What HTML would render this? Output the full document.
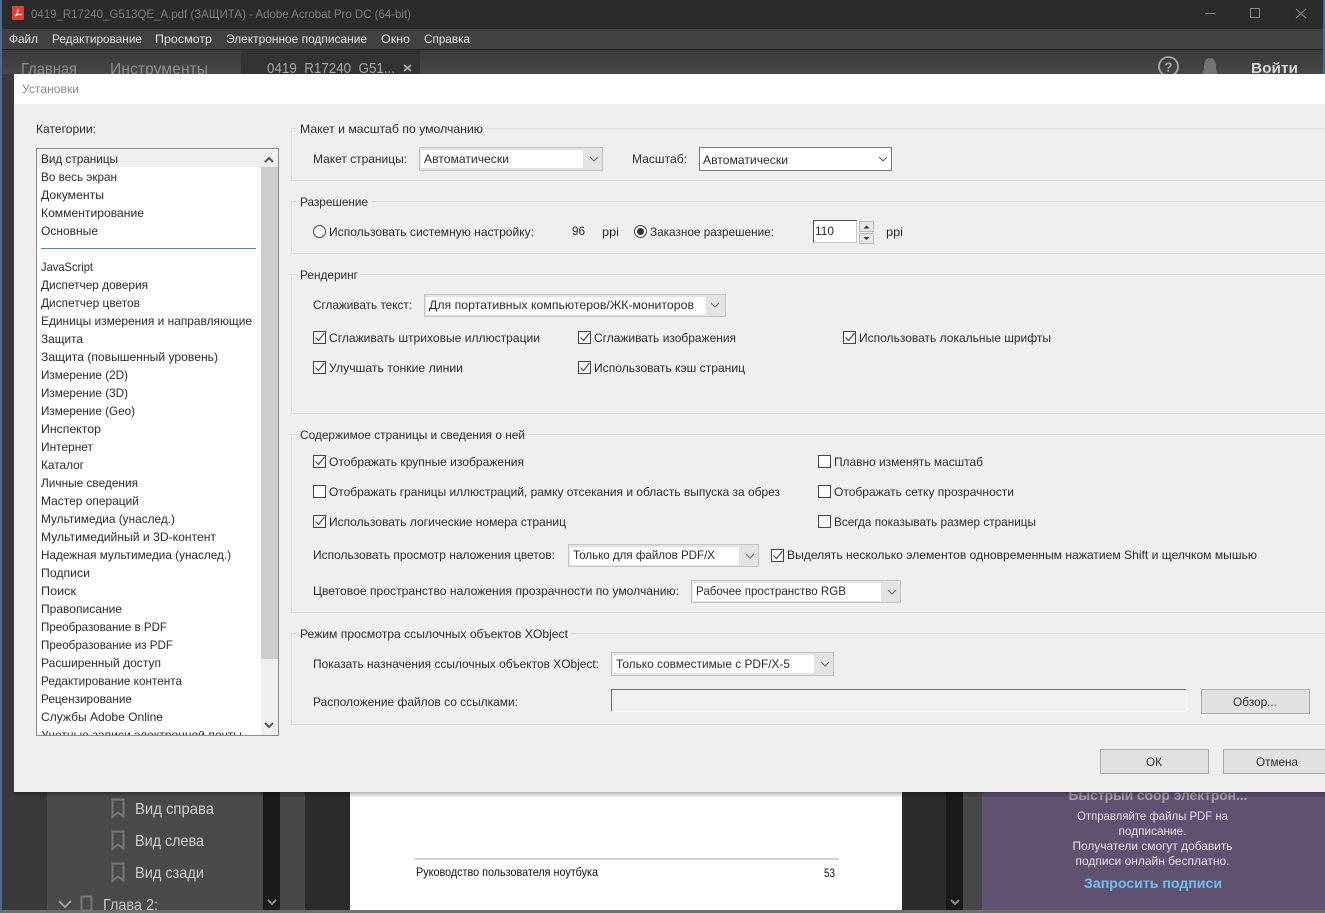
<!DOCTYPE html>
<html><head><meta charset="utf-8"><style>
html,body{margin:0;padding:0;background:#333;overflow:hidden;width:1325px;height:913px}
svg{display:block}
text{font-family:"Liberation Sans",sans-serif;font-size:12px;fill:#2b2b2b;white-space:pre}
.g{fill:none;stroke:#dcdcdc;stroke-width:1}
.btn{fill:#e1e1e1;stroke:#adadad}
.cb{fill:#fdfdfd;stroke:#444;stroke-width:1}
.ck{fill:none;stroke:#444;stroke-width:1.1}
.ch{fill:none;stroke:#666;stroke-width:1}
.sel{fill:#e3e3e3;stroke:#c4c4c4}
.w{fill:#fff}
</style></head><body>
<svg width="1325" height="913" viewBox="0 0 1325 913" xmlns="http://www.w3.org/2000/svg">
<defs>
<linearGradient id="tb" x1="0" y1="0" x2="0" y2="1"><stop offset="0" stop-color="#3a3a3a"/><stop offset="1" stop-color="#474747"/></linearGradient>
<linearGradient id="sh" x1="0" y1="0" x2="0" y2="1"><stop offset="0" stop-color="#000" stop-opacity=".28"/><stop offset="1" stop-color="#000" stop-opacity="0"/></linearGradient>
</defs>
<!-- app chrome -->
<rect width="1325" height="913" fill="#3a3a3a"/>
<rect x="0" y="0" width="2" height="913" fill="#3f6f9f"/>
<rect x="1323" y="0" width="2" height="74" fill="#3f6f9f"/>
<rect x="2" y="0" width="1321" height="29" fill="#2b2b2b"/>
<rect x="2" y="29" width="1321" height="20" fill="#414141"/>
<rect x="2" y="49" width="1321" height="1" fill="#222"/>
<rect x="2" y="50" width="1321" height="24" fill="url(#tb)"/>
<rect x="241" y="50" width="179" height="24" fill="#333"/>
<rect x="12" y="6" width="12" height="14" rx="1" fill="#e0403a"/>
<path d="M15 16c2-1 3-4 3-7M15 16c3-2 5-2 7-1" fill="none" stroke="#fff" stroke-width="1"/>
<text x="31" y="18" textLength="380" lengthAdjust="spacingAndGlyphs" style="fill:#7f7f7f">0419_R17240_G513QE_A.pdf (ЗАЩИТА) - Adobe Acrobat Pro DC (64-bit)</text>
<path d="M1205 13.500h10" stroke="#8a8a8a" fill="none"/>
<rect x="1250.500" y="8.500" width="9" height="9" fill="none" stroke="#8a8a8a"/>
<path d="M1296 9l10 9M1306 9l-10 9" stroke="#8a8a8a" fill="none"/>
<g style="fill:#e4e4e4">
<text x="9" y="43" textLength="29" lengthAdjust="spacingAndGlyphs" style="fill:#e4e4e4">Файл</text>
<text x="52" y="43" textLength="90" lengthAdjust="spacingAndGlyphs" style="fill:#e4e4e4">Редактирование</text>
<text x="155" y="43" textLength="57" lengthAdjust="spacingAndGlyphs" style="fill:#e4e4e4">Просмотр</text>
<text x="226" y="43" textLength="141" lengthAdjust="spacingAndGlyphs" style="fill:#e4e4e4">Электронное подписание</text>
<text x="381" y="43" textLength="29" lengthAdjust="spacingAndGlyphs" style="fill:#e4e4e4">Окно</text>
<text x="424" y="43" textLength="46" lengthAdjust="spacingAndGlyphs" style="fill:#e4e4e4">Справка</text>
</g>
<text x="21" y="74" textLength="56" lengthAdjust="spacingAndGlyphs" style="font-size:16px;fill:#8f8f8f">Главная</text>
<text x="110" y="74" textLength="98" lengthAdjust="spacingAndGlyphs" style="font-size:16px;fill:#8f8f8f">Инструменты</text>
<text x="267" y="73" textLength="128" lengthAdjust="spacingAndGlyphs" style="font-size:15px;fill:#a8a8a8">0419_R17240_G51...</text>
<path d="M404 65l7 6M411 65l-7 6" stroke="#b0b0b0" stroke-width="1.800" fill="none"/>
<circle cx="1168.500" cy="66.500" r="9.500" fill="none" stroke="#a8a8a8" stroke-width="1.800"/>
<text x="1168.500" y="71.500" text-anchor="middle" style="font-size:13px;font-weight:bold;fill:#a8a8a8">?</text>
<path d="M1202 74c1-2 2-3 2-8 0-4 2-8 6-8s6 4 6 8c0 5 1 6 2 8z" fill="#737373"/>
<text x="1251" y="73" textLength="47" lengthAdjust="spacingAndGlyphs" style="font-size:15px;font-weight:bold;fill:#d8d8d8">Войти</text>

<!-- background document, lower area -->
<rect x="2" y="792" width="45" height="118" fill="#3a3a3a"/>
<rect x="47" y="792" width="216" height="118" fill="#4a4a4a"/>
<rect x="263" y="792" width="17" height="118" fill="#1b1b1b"/>
<rect x="280" y="792" width="25" height="118" fill="#474747"/>
<rect x="305" y="792" width="45" height="118" fill="#2b2b2b"/>
<rect x="350" y="792" width="552" height="118" fill="#fff"/>
<rect x="902" y="792" width="44" height="118" fill="#2b2b2b"/>
<rect x="946" y="792" width="17" height="118" fill="#1a1a1a"/>
<rect x="963" y="792" width="19" height="118" fill="#474747"/>
<rect x="982" y="792" width="343" height="118" fill="#5f5270"/>
<rect x="0" y="910" width="1325" height="3" fill="#6e6e6e"/>
<path d="M112.500 799.500h11v17l-5.500-4-5.500 4z" fill="none" stroke="#777" stroke-width="2"/>
<path d="M112.500 831.500h11v17l-5.500-4-5.500 4z" fill="none" stroke="#777" stroke-width="2"/>
<path d="M112.500 863.500h11v17l-5.500-4-5.500 4z" fill="none" stroke="#777" stroke-width="2"/>
<text x="135" y="814" textLength="79" lengthAdjust="spacingAndGlyphs" style="font-size:16px;fill:#d0d0d0">Вид справа</text>
<text x="135" y="846" textLength="69" lengthAdjust="spacingAndGlyphs" style="font-size:16px;fill:#d0d0d0">Вид слева</text>
<text x="135" y="878" textLength="69" lengthAdjust="spacingAndGlyphs" style="font-size:16px;fill:#d0d0d0">Вид сзади</text>
<path d="M59 901l6 6 6-6" fill="none" stroke="#aaa" stroke-width="1.800"/>
<path d="M81.500 896.500h10v14h-10z" fill="none" stroke="#777" stroke-width="2"/>
<svg x="100" y="890" width="70" height="20" viewBox="100 890 70 20"><text x="103" y="910" textLength="55" lengthAdjust="spacingAndGlyphs" style="font-size:16px;fill:#c8c8c8">Глава 2:</text></svg>
<path d="M268 900l4 4 4-4M951 900l4 4 4-4" fill="none" stroke="#8a8a8a" stroke-width="2"/>
<rect x="415" y="858" width="424" height="2" fill="#d0d0d0"/>
<text x="416" y="876" textLength="182" lengthAdjust="spacingAndGlyphs" style="fill:#111">Руководство пользователя ноутбука</text>
<text x="824" y="877" textLength="11" lengthAdjust="spacingAndGlyphs" style="fill:#111">53</text>
<text x="1158" y="800" text-anchor="middle" textLength="179" lengthAdjust="spacingAndGlyphs" style="font-size:14px;font-weight:bold;fill:#a8a2ad">Быстрый сбор электрон...</text>
<g text-anchor="middle">
<text x="1152.500" y="820" textLength="151" lengthAdjust="spacingAndGlyphs" style="fill:#e6e4ea">Отправляйте файлы PDF на</text>
<text x="1152.500" y="835" textLength="68" lengthAdjust="spacingAndGlyphs" style="fill:#e6e4ea">подписание.</text>
<text x="1152.500" y="850" textLength="160" lengthAdjust="spacingAndGlyphs" style="fill:#e6e4ea">Получатели смогут добавить</text>
<text x="1152.500" y="865" textLength="154" lengthAdjust="spacingAndGlyphs" style="fill:#e6e4ea">подписи онлайн бесплатно.</text>
<text x="1153" y="888" textLength="138" lengthAdjust="spacingAndGlyphs" style="font-size:14px;font-weight:bold;fill:#6fc0ee">Запросить подписи</text>
</g>

<!-- dialog -->
<rect x="14" y="792" width="1311" height="6" fill="url(#sh)"/>
<rect x="14" y="74" width="1311" height="718" fill="#efefef"/>
<rect x="14" y="74" width="1311" height="30" fill="#fff"/>
<text x="22" y="93" textLength="57" lengthAdjust="spacingAndGlyphs" style="fill:#8a8a8a">Установки</text>
<text x="36" y="133" textLength="60" lengthAdjust="spacingAndGlyphs">Категории:</text>

<!-- list -->
<rect x="36.500" y="148.500" width="242" height="587" fill="#fff" stroke="#8a8a8a"/>
<rect x="37" y="149" width="224" height="18" fill="#efefef"/>
<rect x="261" y="149" width="17" height="586" fill="#efefef"/>
<rect x="261" y="167" width="17" height="492" fill="#cdcdcd"/>
<path d="M265 162l4-4 4 4M265 723l4 4 4-4" fill="none" stroke="#555" stroke-width="2"/>
<text x="41" y="163" textLength="77" lengthAdjust="spacingAndGlyphs">Вид страницы</text>
<text x="41" y="181" textLength="76" lengthAdjust="spacingAndGlyphs">Во весь экран</text>
<text x="41" y="199" textLength="63" lengthAdjust="spacingAndGlyphs">Документы</text>
<text x="41" y="217" textLength="103" lengthAdjust="spacingAndGlyphs">Комментирование</text>
<text x="41" y="235" textLength="57" lengthAdjust="spacingAndGlyphs">Основные</text>
<rect x="41" y="248" width="215" height="1" fill="#4f8f9f"/>
<text x="41" y="271" textLength="52" lengthAdjust="spacingAndGlyphs">JavaScript</text>
<text x="41" y="289" textLength="107" lengthAdjust="spacingAndGlyphs">Диспетчер доверия</text>
<text x="41" y="307" textLength="99" lengthAdjust="spacingAndGlyphs">Диспетчер цветов</text>
<text x="41" y="325" textLength="211" lengthAdjust="spacingAndGlyphs">Единицы измерения и направляющие</text>
<text x="41" y="343" textLength="42" lengthAdjust="spacingAndGlyphs">Защита</text>
<text x="41" y="361" textLength="177" lengthAdjust="spacingAndGlyphs">Защита (повышенный уровень)</text>
<text x="41" y="379" textLength="87" lengthAdjust="spacingAndGlyphs">Измерение (2D)</text>
<text x="41" y="397" textLength="87" lengthAdjust="spacingAndGlyphs">Измерение (3D)</text>
<text x="41" y="415" textLength="94" lengthAdjust="spacingAndGlyphs">Измерение (Geo)</text>
<text x="41" y="433" textLength="60" lengthAdjust="spacingAndGlyphs">Инспектор</text>
<text x="41" y="451" textLength="52" lengthAdjust="spacingAndGlyphs">Интернет</text>
<text x="41" y="469" textLength="43" lengthAdjust="spacingAndGlyphs">Каталог</text>
<text x="41" y="487" textLength="97" lengthAdjust="spacingAndGlyphs">Личные сведения</text>
<text x="41" y="505" textLength="98" lengthAdjust="spacingAndGlyphs">Мастер операций</text>
<text x="41" y="523" textLength="134" lengthAdjust="spacingAndGlyphs">Мультимедиа (унаслед.)</text>
<text x="41" y="541" textLength="175" lengthAdjust="spacingAndGlyphs">Мультимедийный и 3D-контент</text>
<text x="41" y="559" textLength="190" lengthAdjust="spacingAndGlyphs">Надежная мультимедиа (унаслед.)</text>
<text x="41" y="577" textLength="49" lengthAdjust="spacingAndGlyphs">Подписи</text>
<text x="41" y="595" textLength="35" lengthAdjust="spacingAndGlyphs">Поиск</text>
<text x="41" y="613" textLength="81" lengthAdjust="spacingAndGlyphs">Правописание</text>
<text x="41" y="631" textLength="126" lengthAdjust="spacingAndGlyphs">Преобразование в PDF</text>
<text x="41" y="649" textLength="132" lengthAdjust="spacingAndGlyphs">Преобразование из PDF</text>
<text x="41" y="667" textLength="120" lengthAdjust="spacingAndGlyphs">Расширенный доступ</text>
<text x="41" y="685" textLength="141" lengthAdjust="spacingAndGlyphs">Редактирование контента</text>
<text x="41" y="703" textLength="91" lengthAdjust="spacingAndGlyphs">Рецензирование</text>
<text x="41" y="721" textLength="122" lengthAdjust="spacingAndGlyphs">Службы Adobe Online</text>
<svg x="37" y="731" width="224" height="4" viewBox="37 731 224 4"><text x="41" y="739" textLength="201" lengthAdjust="spacingAndGlyphs">Учетные записи электронной почты</text></svg>

<!-- group boxes -->
<path class="g" d="M291.500 180.500V128.500h1034M291.500 180.500h1034"/>
<path class="g" d="M291.500 253.500V201.500h1034M291.500 253.500h1034"/>
<path class="g" d="M291.500 413.500V274.500h1034M291.500 413.500h1034"/>
<path class="g" d="M291.500 612.500V434.500h1034M291.500 612.500h1034"/>
<path class="g" d="M291.500 724.500V633.500h1034M291.500 724.500h1034"/>
<rect x="298" y="122" width="187" height="14" fill="#efefef"/>
<rect x="298" y="195" width="74" height="14" fill="#efefef"/>
<rect x="298" y="268" width="62" height="14" fill="#efefef"/>
<rect x="298" y="428" width="229" height="14" fill="#efefef"/>
<rect x="298" y="627" width="273" height="14" fill="#efefef"/>
<text x="300" y="133" textLength="183" lengthAdjust="spacingAndGlyphs">Макет и масштаб по умолчанию</text>
<text x="300" y="206" textLength="68" lengthAdjust="spacingAndGlyphs">Разрешение</text>
<text x="300" y="279" textLength="58" lengthAdjust="spacingAndGlyphs">Рендеринг</text>
<text x="300" y="439" textLength="225" lengthAdjust="spacingAndGlyphs">Содержимое страницы и сведения о ней</text>
<text x="300" y="638" textLength="268" lengthAdjust="spacingAndGlyphs">Режим просмотра ссылочных объектов XObject</text>

<!-- section 1 -->
<text x="313" y="163" textLength="94" lengthAdjust="spacingAndGlyphs">Макет страницы:</text>
<rect class="sel" x="419.500" y="147.500" width="183" height="23"/>
<rect class="w" x="421" y="150" width="162" height="18"/>
<path class="ch" d="M590 157l4 4 4-4"/>
<text x="424" y="163" textLength="85" lengthAdjust="spacingAndGlyphs">Автоматически</text>
<text x="632" y="163" textLength="55" lengthAdjust="spacingAndGlyphs">Масштаб:</text>
<rect x="699.500" y="147.500" width="192" height="23" fill="#fff" stroke="#7a7a7a"/>
<path class="ch" d="M879 157l4 4 4-4"/>
<text x="703" y="164" textLength="85" lengthAdjust="spacingAndGlyphs">Автоматически</text>

<!-- section 2 -->
<circle cx="319.500" cy="231.500" r="6" fill="#fdfdfd" stroke="#444"/>
<text x="329" y="236" textLength="205" lengthAdjust="spacingAndGlyphs">Использовать системную настройку:</text>
<text x="572" y="235" textLength="13" lengthAdjust="spacingAndGlyphs">96</text>
<text x="602" y="236" textLength="17" lengthAdjust="spacingAndGlyphs">ppi</text>
<circle cx="640.500" cy="231.500" r="6" fill="#fdfdfd" stroke="#444"/>
<circle cx="640.500" cy="231.500" r="3.500" fill="#333"/>
<text x="650" y="236" textLength="124" lengthAdjust="spacingAndGlyphs">Заказное разрешение:</text>
<rect x="813.500" y="220.500" width="43" height="22" fill="#fff" stroke="#c8c8c8"/>
<path d="M813.500 242.500v-22h43" fill="none" stroke="#555"/>
<text x="815" y="235" textLength="19" lengthAdjust="spacingAndGlyphs">110</text>
<rect x="859.500" y="221.500" width="14" height="10" fill="#e6e6e6" stroke="#bbb"/>
<rect x="859.500" y="233.500" width="14" height="10" fill="#e6e6e6" stroke="#bbb"/>
<path d="M863.500 228.500l3-3 3 3z M863.500 237l3 3 3-3z" fill="#333"/>
<text x="886" y="236" textLength="17" lengthAdjust="spacingAndGlyphs">ppi</text>

<!-- section 3 -->
<text x="313" y="309" textLength="99" lengthAdjust="spacingAndGlyphs">Сглаживать текст:</text>
<rect class="sel" x="424.500" y="294.500" width="301" height="22"/>
<rect class="w" x="426" y="297" width="280" height="18"/>
<path class="ch" d="M711 303l4 4 4-4"/>
<text x="429" y="309" textLength="265" lengthAdjust="spacingAndGlyphs">Для портативных компьютеров/ЖК-мониторов</text>
<rect class="cb" x="313.500" y="331.500" width="12" height="12"/><path class="ck" d="M315.500 337.500l3 3 6-7.500"/>
<text x="329" y="342" textLength="211" lengthAdjust="spacingAndGlyphs">Сглаживать штриховые иллюстрации</text>
<rect class="cb" x="578.500" y="331.500" width="12" height="12"/><path class="ck" d="M580.500 337.500l3 3 6-7.500"/>
<text x="594" y="342" textLength="142" lengthAdjust="spacingAndGlyphs">Сглаживать изображения</text>
<rect class="cb" x="843.500" y="331.500" width="12" height="12"/><path class="ck" d="M845.500 337.500l3 3 6-7.500"/>
<text x="859" y="342" textLength="192" lengthAdjust="spacingAndGlyphs">Использовать локальные шрифты</text>
<rect class="cb" x="313.500" y="361.500" width="12" height="12"/><path class="ck" d="M315.500 367.500l3 3 6-7.500"/>
<text x="329" y="372" textLength="134" lengthAdjust="spacingAndGlyphs">Улучшать тонкие линии</text>
<rect class="cb" x="578.500" y="361.500" width="12" height="12"/><path class="ck" d="M580.500 367.500l3 3 6-7.500"/>
<text x="594" y="372" textLength="151" lengthAdjust="spacingAndGlyphs">Использовать кэш страниц</text>

<!-- section 4 -->
<rect class="cb" x="313.500" y="455.500" width="12" height="12"/><path class="ck" d="M315.500 461.500l3 3 6-7.500"/>
<text x="329" y="466" textLength="195" lengthAdjust="spacingAndGlyphs">Отображать крупные изображения</text>
<rect class="cb" x="818.500" y="455.500" width="12" height="12"/>
<text x="834" y="466" textLength="149" lengthAdjust="spacingAndGlyphs">Плавно изменять масштаб</text>
<rect class="cb" x="313.500" y="485.500" width="12" height="12"/>
<text x="329" y="496" textLength="451" lengthAdjust="spacingAndGlyphs">Отображать границы иллюстраций, рамку отсекания и область выпуска за обрез</text>
<rect class="cb" x="818.500" y="485.500" width="12" height="12"/>
<text x="834" y="496" textLength="180" lengthAdjust="spacingAndGlyphs">Отображать сетку прозрачности</text>
<rect class="cb" x="313.500" y="515.500" width="12" height="12"/><path class="ck" d="M315.500 521.500l3 3 6-7.500"/>
<text x="329" y="526" textLength="237" lengthAdjust="spacingAndGlyphs">Использовать логические номера страниц</text>
<rect class="cb" x="818.500" y="515.500" width="12" height="12"/>
<text x="834" y="526" textLength="202" lengthAdjust="spacingAndGlyphs">Всегда показывать размер страницы</text>
<text x="313" y="559" textLength="242" lengthAdjust="spacingAndGlyphs">Использовать просмотр наложения цветов:</text>
<rect class="sel" x="568.500" y="544.500" width="190" height="22"/>
<rect class="w" x="570" y="547" width="169" height="18"/>
<path class="ch" d="M746 554l4 4 4-4"/>
<text x="573" y="559" textLength="142" lengthAdjust="spacingAndGlyphs">Только для файлов PDF/X</text>
<rect class="cb" x="771.500" y="549.500" width="12" height="12"/><path class="ck" d="M773.500 555.500l3 3 6-7.500"/>
<text x="787" y="559" textLength="470" lengthAdjust="spacingAndGlyphs">Выделять несколько элементов одновременным нажатием Shift и щелчком мышью</text>
<text x="313" y="595" textLength="366" lengthAdjust="spacingAndGlyphs">Цветовое пространство наложения прозрачности по умолчанию:</text>
<rect class="sel" x="691.500" y="580.500" width="209" height="22"/>
<rect class="w" x="693" y="583" width="188" height="18"/>
<path class="ch" d="M888 590l4 4 4-4"/>
<text x="696" y="595" textLength="150" lengthAdjust="spacingAndGlyphs">Рабочее пространство RGB</text>

<!-- section 5 -->
<text x="313" y="668" textLength="286" lengthAdjust="spacingAndGlyphs">Показать назначения ссылочных объектов XObject:</text>
<rect class="sel" x="611.500" y="652.500" width="222" height="23"/>
<rect class="w" x="613" y="655" width="201" height="18"/>
<path class="ch" d="M821 662l4 4 4-4"/>
<text x="616" y="668" textLength="174" lengthAdjust="spacingAndGlyphs">Только совместимые с PDF/X-5</text>
<text x="313" y="706" textLength="205" lengthAdjust="spacingAndGlyphs">Расположение файлов со ссылками:</text>
<rect x="611.500" y="689.500" width="575" height="22" fill="#f0f0f0" stroke="#fff"/>
<path d="M611.500 711.500v-22h575" fill="none" stroke="#6d6d6d"/>
<rect class="btn" x="1201.500" y="689.500" width="108" height="24"/>
<text x="1255" y="706" text-anchor="middle" textLength="44" lengthAdjust="spacingAndGlyphs">Обзор...</text>
<rect class="btn" x="1100.500" y="749.500" width="108" height="24"/>
<text x="1154" y="766" text-anchor="middle" textLength="16" lengthAdjust="spacingAndGlyphs">ОК</text>
<rect class="btn" x="1223.500" y="749.500" width="110" height="24"/>
<text x="1277" y="766" text-anchor="middle" textLength="42" lengthAdjust="spacingAndGlyphs">Отмена</text>
</svg>
</body></html>
